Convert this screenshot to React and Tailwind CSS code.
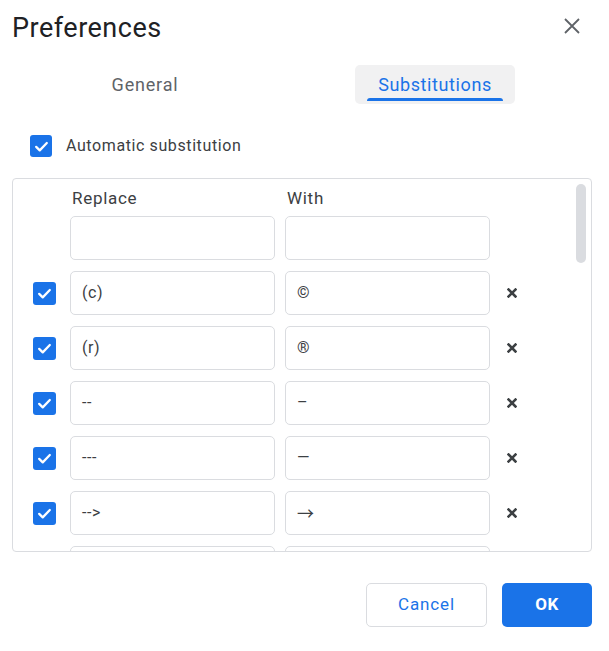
import React from "react";

const rows = [
  { from: "(c)", to: "©" },
  { from: "(r)", to: "®" },
  { from: "--", to: "–" },
  { from: "---", to: "—" },
  { from: "-->", to: "→" },
  { from: "", to: "" },
];

function Check({ size = "w-[23px] h-[23px]" }) {
  return (
    <span className={`${size} shrink-0 rounded-[3px] bg-[#1a73e8] flex items-center justify-center`}>
      <svg width="17" height="17" viewBox="0 0 24 24" fill="none">
        <path d="M4.5 12.5l5 5L19.5 7" stroke="#fff" strokeWidth="3.2" strokeLinecap="round" strokeLinejoin="round" />
      </svg>
    </span>
  );
}

function Field({ value }) {
  return (
    <div className="w-[205px] h-[44px] shrink-0 border border-[#dadce0] rounded-[5px] bg-white flex items-center pl-[11px] text-[16px] tracking-[0.6px] text-[#3c4043]">
      {value === "→" ? <span className="font-['Noto_Sans_CJK_SC',sans-serif] text-[17px]">{value}</span> : value}
    </div>
  );
}

export default function App() {
  return (
    <div className="w-[609px] h-[651px] bg-white font-['Roboto','Liberation_Sans',sans-serif] text-[#3c4043] overflow-hidden">
      {/* title */}
      <div className="flex justify-between items-start pl-[12px] pr-[25px] pt-[12px]">
        <h1 className="text-[27px] leading-[32px] tracking-[0.5px] text-[#202124]">Preferences</h1>
        <svg className="mt-[2px]" width="24" height="24" viewBox="0 0 24 24" fill="none">
          <path d="M5 5l14 14M19 5L5 19" stroke="#5f6368" strokeWidth="1.8" />
        </svg>
      </div>

      {/* tabs */}
      <div className="mt-[21px] w-[580px] grid grid-cols-2">
        <div className="flex justify-center">
          <div className="px-[12px] pt-[8px] pb-[2px]">
            <div className="px-[11px] text-[18px] leading-[24px] tracking-[0.8px] text-[#5f6368]">General</div>
            <div className="mt-[1px] h-[3px]" />
          </div>
        </div>
        <div className="flex justify-center">
          <div className="px-[12px] pt-[8px] pb-[3px] bg-[#f1f1f2] rounded-[5px]">
            <div className="px-[11px] text-[18px] leading-[24px] tracking-[0.6px] text-[#1a73e8]">Substitutions</div>
            <div className="mt-[1px] h-[3px] bg-[#1a73e8] rounded-t-[3px]" />
          </div>
        </div>
      </div>

      {/* automatic */}
      <div className="mt-[31px] pl-[30px] flex items-center gap-[14px]">
        <Check size="w-[22px] h-[22px]" />
        <span className="text-[16px] leading-[22px] tracking-[0.6px]">Automatic substitution</span>
      </div>

      {/* table */}
      <div className="mt-[21px] ml-[12px] w-[580px] h-[374px] border border-[#dadce0] rounded-[4px] relative overflow-hidden">
        <div className="flex pt-[7px] text-[17px] leading-[24px] tracking-[0.7px] text-[#3c4043]">
          <div className="w-[57px]" />
          <div className="w-[205px] pl-[2px]">Replace</div>
          <div className="w-[205px] ml-[10px] pl-[2px]">With</div>
        </div>
        <div className="mt-[6px] flex flex-col gap-[11px]">
          <div className="flex items-center">
            <div className="w-[57px]" />
            <Field value="" />
            <div className="ml-[10px]">
              <Field value="" />
            </div>
          </div>
          {rows.map((r, i) => (
            <div key={i} className="flex items-center">
              <div className="w-[57px] pl-[20px]">
                <Check />
              </div>
              <Field value={r.from} />
              <div className="ml-[10px]">
                <Field value={r.to} />
              </div>
              <div className="w-[44px] flex justify-center">
                <svg width="10" height="10" viewBox="0 0 10 10">
                  <path d="M1.5 1.5l7 7M8.5 1.5l-7 7" stroke="#3c4043" strokeWidth="2.5" strokeLinecap="square" />
                </svg>
              </div>
            </div>
          ))}
        </div>
        <div className="absolute right-[5px] top-[5px] w-[10px] h-[79px] rounded-full bg-[#dadce0]" />
      </div>

      {/* buttons */}
      <div className="mt-[31px] flex justify-end gap-[15px] pr-[17px]">
        <button className="w-[121px] h-[44px] border border-[#dadce0] rounded-[5px] bg-white text-[17px] tracking-[0.9px] text-[#1a73e8]">
          Cancel
        </button>
        <button className="w-[90px] h-[44px] rounded-[5px] bg-[#1a73e8] text-[17px] tracking-[0.5px] font-bold text-white">
          OK
        </button>
      </div>
    </div>
  );
}
